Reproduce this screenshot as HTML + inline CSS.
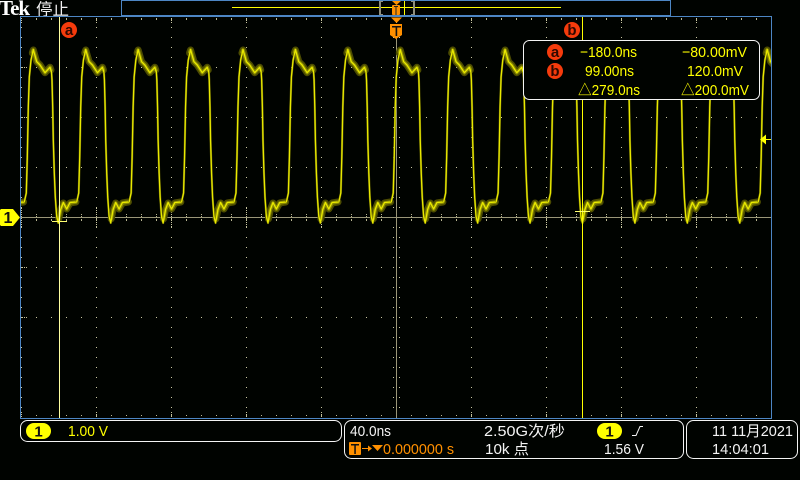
<!DOCTYPE html>
<html>
<head>
<meta charset="utf-8">
<style>
html,body{margin:0;padding:0;background:#000300;width:800px;height:480px;overflow:hidden}
svg{display:block}
text{font-family:"Liberation Sans","Noto Sans CJK SC",sans-serif;font-size:15px}
.y{fill:#ffff00}.w{fill:#f4f4f4}.o{fill:#ff9000}
</style>
</head>
<body>
<svg width="800" height="480" viewBox="0 0 800 480" xmlns="http://www.w3.org/2000/svg">
<defs>
<pattern id="row" patternUnits="userSpaceOnUse" x="6" y="67" width="15" height="50"><rect x="0" y="0" width="1" height="1" fill="#c8c6a0"/></pattern>
<pattern id="col" patternUnits="userSpaceOnUse" x="21" y="27" width="75" height="10"><rect x="0" y="0" width="1" height="1" fill="#c8c6a0"/></pattern>
<pattern id="tick" patternUnits="userSpaceOnUse" x="6" y="0" width="15" height="3"><rect x="0" y="0" width="1" height="2" fill="#b8b690"/></pattern>
<pattern id="tick2" patternUnits="userSpaceOnUse" x="21" y="18" width="75" height="2"><rect x="0" y="0" width="1" height="1" fill="#c8c6a0"/></pattern>
<pattern id="ctr" patternUnits="userSpaceOnUse" x="393" y="27" width="3" height="10"><rect x="0" y="0" width="1" height="1" fill="#c8c6a0"/></pattern>
<pattern id="left" patternUnits="userSpaceOnUse" x="22" y="67" width="2" height="50"><rect x="0" y="0" width="1" height="1" fill="#c8c6a0"/></pattern>
<clipPath id="clip"><rect x="21" y="17" width="750" height="401"/></clipPath>
<clipPath id="topc"><rect x="0" y="0" width="121" height="16"/></clipPath>
<g id="per">
<polyline fill="none" stroke="#5c5c00" stroke-width="2.2" stroke-linejoin="round" points="24.3,202 26.3,193 27.3,157 28.3,107 29.3,77 31,60 33.3,49.5 36.7,61.7 40,65 45,72.7 50,67.3 51.5,72 52,80 52.7,107 53.3,140 54.3,173 55.3,197 56.7,216.7 58.3,223 60.7,209.5 63.3,202.5 66.7,209 70,202.5 76.7,202"/>
<polyline fill="none" stroke="#4c4c00" stroke-width="7" stroke-linejoin="round" stroke-linecap="round" points="32.3,53 33.3,50 36.7,61.7 40,65 45,72.7 50,67.3 51,70"/>
<polyline fill="none" stroke="#4c4c00" stroke-width="7" stroke-linejoin="round" stroke-linecap="round" points="58.7,219 60.7,209.5 63.3,203 66.7,209 70,203 76,202"/>
<polyline fill="none" stroke="#8a8a00" stroke-width="3.6" stroke-linejoin="round" stroke-linecap="round" points="32.5,52 33.3,50 36.7,61.7 40,65 45,72.7 50,67.3 51,70"/>
<polyline fill="none" stroke="#8a8a00" stroke-width="3.6" stroke-linejoin="round" stroke-linecap="round" points="58.7,219 60.7,209.5 63.3,203 66.7,209 70,203 76,202"/>
<polyline fill="none" stroke="#eaea00" stroke-width="1.3" stroke-linejoin="round" points="24.3,202 26.3,193 27.3,157 28.3,107 29.3,77 31,60 33.3,49.5 36.7,61.7 40,65 45,72.7 50,67.3 51.5,72 52,80 52.7,107 53.3,140 54.3,173 55.3,197 56.7,216.7 58.3,223 60.7,209.5 63.3,202.5 66.7,209 70,202.5 76.7,202"/>
</g>
</defs>

<!-- top bar -->
<text x="-1" y="15" style="font-family:'Liberation Serif',serif;font-weight:bold;font-size:21px;letter-spacing:-1px" fill="#fff">Tek</text>
<g clip-path="url(#topc)"><text x="36" y="15" style="font-size:16.5px;font-family:'Noto Sans CJK SC',sans-serif" fill="#f0f0f0">停止</text></g>
<rect x="121.5" y="0.5" width="549" height="15" fill="none" stroke="#4d86c4" stroke-width="1"/>
<rect x="232" y="7" width="329" height="1" fill="#ffff00"/>
<rect x="379" y="1" width="2" height="14" fill="#8f8f7e"/><rect x="381" y="1" width="2" height="1" fill="#8f8f7e"/><rect x="381" y="14" width="2" height="1" fill="#8f8f7e"/>
<rect x="413" y="1" width="2" height="14" fill="#8f8f7e"/><rect x="411" y="1" width="2" height="1" fill="#8f8f7e"/><rect x="411" y="14" width="2" height="1" fill="#8f8f7e"/>
<rect x="404" y="1" width="1" height="14" fill="#ffff00"/>
<polygon points="392,1 401,1 396.5,5" fill="#ff9000"/>
<rect x="392" y="5" width="8" height="10" rx="1" fill="#ff9000"/>
<rect x="394" y="6" width="4" height="1" fill="#222"/><rect x="395.5" y="6" width="1" height="9" fill="#222"/>

<!-- graticule -->
<rect x="6" y="67" width="765" height="300" fill="url(#row)" clip-path="url(#clip)"/>
<rect x="21" y="27" width="750" height="390" fill="url(#col)"/>
<rect x="22" y="67" width="5" height="300" fill="url(#left)"/>
<rect x="36" y="18" width="735" height="2" fill="url(#tick)"/>
<rect x="36" y="415" width="735" height="2" fill="url(#tick)"/>
<rect x="21" y="18" width="750" height="5" fill="url(#tick2)"/>
<rect x="21" y="412" width="750" height="5" fill="url(#tick2)"/>
<rect x="36" y="214" width="735" height="7" fill="url(#tick)"/>
<rect x="21" y="207" width="750" height="21" fill="url(#tick2)"/>
<rect x="393" y="27" width="8" height="390" fill="url(#ctr)"/>

<rect x="21" y="217" width="750" height="1" fill="#9a9678"/>
<rect x="396" y="38" width="1" height="380" fill="#9a9678"/>

<!-- waveform -->
<g clip-path="url(#clip)">
<use href="#per" x="-52.42"/><use href="#per"/><use href="#per" x="52.42"/><use href="#per" x="104.84"/><use href="#per" x="157.26"/><use href="#per" x="209.68"/><use href="#per" x="262.1"/><use href="#per" x="314.52"/><use href="#per" x="366.94"/><use href="#per" x="419.36"/><use href="#per" x="471.78"/><use href="#per" x="524.2"/><use href="#per" x="576.62"/><use href="#per" x="629.04"/><use href="#per" x="681.46"/><use href="#per" x="733.88"/>
</g>

<!-- cursors -->
<rect x="59" y="17" width="1" height="401" fill="#ffffa0"/>
<rect x="582" y="17" width="1" height="401" fill="#ffff00"/>
<rect x="52" y="221" width="15" height="1" fill="#ffff70"/>
<rect x="575" y="211" width="15" height="1" fill="#ffff70"/>

<!-- frame -->
<rect x="20.5" y="16.5" width="751" height="402" fill="none" stroke="#4d86c4" stroke-width="1"/>

<!-- cursor labels -->
<circle cx="69" cy="30" r="8" fill="#f53b0c"/><text x="69" y="35" text-anchor="middle" style="font-size:15px;font-weight:bold" fill="#300800">a</text>
<circle cx="572" cy="30" r="8" fill="#f53b0c"/><text x="572" y="35" text-anchor="middle" style="font-size:15px;font-weight:bold" fill="#300800">b</text>

<!-- trigger T -->
<polygon points="391,17.5 402,17.5 396.5,23" fill="#ff9000"/>
<polygon points="390,24 402,24 402,35 396,39 390,35" fill="#ff9000"/>
<rect x="392" y="26" width="9" height="1.5" fill="#111"/><rect x="395.6" y="26" width="1.6" height="10" fill="#111"/>

<!-- ch1 marker -->
<polygon points="1,209 13,209 20,217.5 13,226 1,226 0,225 0,210" fill="#ffff00"/>
<text x="8" y="223" text-anchor="middle" style="font-size:16px;font-weight:bold" fill="#111">1</text>

<!-- trigger level arrow -->
<polygon points="760,139.5 766,134.5 766,144.5" fill="#ffff00"/><rect x="766" y="139" width="5" height="1" fill="#ffff00"/>

<!-- readout -->
<rect x="523.5" y="40.5" width="236" height="59" rx="6" fill="#000300" stroke="#f4f4f4" stroke-width="1"/>
<circle cx="555" cy="52" r="8" fill="#f53b0c"/><text x="555" y="57" text-anchor="middle" style="font-size:15px;font-weight:bold" fill="#300800">a</text>
<circle cx="555" cy="71" r="8" fill="#f53b0c"/><text x="555" y="76" text-anchor="middle" style="font-size:15px;font-weight:bold" fill="#300800">b</text>
<text class="y" x="580" y="57" textLength="57" lengthAdjust="spacingAndGlyphs">−180.0ns</text>
<text class="y" x="585" y="76" textLength="49" lengthAdjust="spacingAndGlyphs">99.00ns</text>
<text class="y" x="578" y="95" textLength="62" lengthAdjust="spacingAndGlyphs">△279.0ns</text>
<text class="y" x="682" y="57" textLength="65" lengthAdjust="spacingAndGlyphs">−80.00mV</text>
<text class="y" x="687" y="76" textLength="56" lengthAdjust="spacingAndGlyphs">120.0mV</text>
<text class="y" x="681" y="95" textLength="68" lengthAdjust="spacingAndGlyphs">△200.0mV</text>

<!-- bottom: ch box -->
<rect x="20.5" y="420.5" width="321" height="21" rx="7" fill="none" stroke="#f4f4f4" stroke-width="1"/>
<rect x="26" y="423" width="25" height="16" rx="8" fill="#ffff00"/>
<text x="38.5" y="436.5" text-anchor="middle" style="font-size:15px;font-weight:bold" fill="#111">1</text>
<text class="y" x="68" y="436" textLength="40" lengthAdjust="spacingAndGlyphs">1.00 V</text>

<!-- bottom: horizontal box -->
<rect x="344.5" y="420.5" width="339" height="38" rx="7" fill="none" stroke="#f4f4f4" stroke-width="1"/>
<text class="w" x="350" y="436" textLength="41" lengthAdjust="spacingAndGlyphs">40.0ns</text>
<rect x="349" y="442" width="12" height="13" rx="1" fill="#ff9000"/>
<rect x="351" y="444" width="8" height="1.5" fill="#111"/><rect x="354.3" y="444" width="1.5" height="10" fill="#111"/>
<rect x="362" y="448" width="7" height="1" fill="#ff9000"/><polygon points="372,448.5 368,445.5 368,451.5" fill="#ff9000"/>
<polygon points="372,445 383,445 377.5,451" fill="#ff9000"/>
<text class="o" x="383" y="454" textLength="71" lengthAdjust="spacingAndGlyphs">0.000000 s</text>
<text class="w" x="484" y="436" textLength="81" lengthAdjust="spacingAndGlyphs">2.50G次/秒</text>
<text class="w" x="485" y="454" textLength="44" lengthAdjust="spacingAndGlyphs">10k 点</text>
<rect x="597" y="423" width="25" height="16" rx="8" fill="#ffff00"/>
<text x="609.5" y="436.5" text-anchor="middle" style="font-size:15px;font-weight:bold" fill="#111">1</text>
<polyline points="632,435.5 636,435.5 640,426.5 643,426.5" fill="none" stroke="#f4f4f4" stroke-width="1"/>
<text class="w" x="604" y="454" textLength="40" lengthAdjust="spacingAndGlyphs">1.56 V</text>

<!-- bottom: date box -->
<rect x="686.5" y="420.5" width="111" height="38" rx="7" fill="none" stroke="#f4f4f4" stroke-width="1"/>
<text class="w" x="712" y="436" textLength="81" lengthAdjust="spacingAndGlyphs">11 11月2021</text>
<text class="w" x="712" y="454" textLength="57" lengthAdjust="spacingAndGlyphs">14:04:01</text>
</svg>
</body>
</html>
